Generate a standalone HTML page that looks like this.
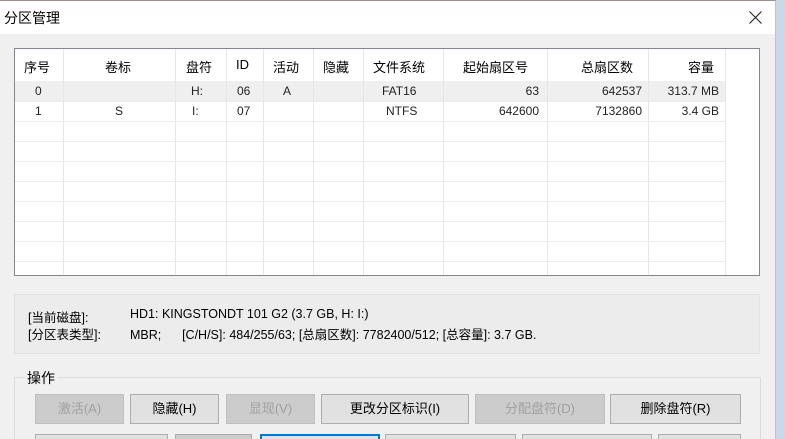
<!DOCTYPE html>
<html style="height:439px;overflow:hidden"><head><meta charset="utf-8"><style>
body{margin:0;width:785px;height:439px;overflow:hidden;background:#c9d9e8;font-family:"Liberation Sans","Noto Sans CJK SC",sans-serif;font-size:13px;color:#000;position:relative}
.win{position:absolute;left:0;top:0;width:775px;height:438px;background:#f0f0f0;border-top:1px solid #9a8f8a;border-right:1px solid #b8c4d0;overflow:hidden}
.title{position:absolute;left:0;top:0;width:775px;height:33px;background:#fff}
.title span{position:absolute;left:4px;top:7px;font-size:14px}
.x{position:absolute;left:749px;top:10px}
.tbl{position:absolute;left:14px;top:47px;width:744px;height:226px;background:#fff;border:1px solid #828790;overflow:hidden}
.c{position:absolute;top:0;height:226px;border-right:1px solid #e6e6e6}
.hd{position:absolute;top:8px;font-size:13px}
.r{position:absolute;left:0;width:711px;height:20px;border-bottom:1px solid #ececec}
.t{position:absolute;font-size:12px;top:3px;color:#222}
.info{position:absolute;left:14px;top:293px;width:744px;height:58px;background:#ececec;border:1px solid #e2e2e2;font-size:12.5px}
.grp{position:absolute;left:14px;top:376px;width:745px;height:70px;border:1px solid #dcdcdc}
.lbl{position:absolute;left:25px;top:367px;background:#f0f0f0;padding:0 2px;font-size:14px}
.b{position:absolute;height:28px;border:1px solid #adadad;background:#e1e1e1;text-align:center;line-height:28px;font-size:13px}
.b2{height:6px;border-bottom:none}
.d{color:#a0a0a0;background:#cccccc;border-color:#bfbfbf}
</style></head><body>
<div class="win">
<div class="title"><span>分区管理</span><svg class="x" width="13" height="13" viewBox="0 0 13 13"><path d="M0.5 0.5L12.5 12.5M12.5 0.5L0.5 12.5" stroke="#222" stroke-width="1.1"/></svg></div>
<div class="tbl">
<div class="r" style="top:32px;background:#efefef"></div>
<div class="r" style="top:52px"></div>
<div class="r" style="top:72px"></div><div class="r" style="top:92px"></div><div class="r" style="top:112px"></div><div class="r" style="top:132px"></div><div class="r" style="top:152px"></div><div class="r" style="top:172px"></div><div class="r" style="top:192px"></div><div class="r" style="top:212px"></div>
<div class="c" style="left:0;width:48px"></div>
<div class="c" style="left:49px;width:111px"></div>
<div class="c" style="left:161px;width:50px"></div>
<div class="c" style="left:212px;width:36px"></div>
<div class="c" style="left:249px;width:49px"></div>
<div class="c" style="left:299px;width:49px"></div>
<div class="c" style="left:349px;width:79px"></div>
<div class="c" style="left:429px;width:103px"></div>
<div class="c" style="left:533px;width:100px"></div>
<div class="c" style="left:634px;width:76px"></div>
<div class="hd" style="left:9px">序号</div>
<div class="hd" style="left:90px">卷标</div>
<div class="hd" style="left:171px">盘符</div>
<div class="hd" style="left:221px">ID</div>
<div class="hd" style="left:258px">活动</div>
<div class="hd" style="left:308px">隐藏</div>
<div class="hd" style="left:358px">文件系统</div>
<div class="hd" style="left:448px">起始扇区号</div>
<div class="hd" style="left:566px">总扇区数</div>
<div class="hd" style="left:673px">容量</div>
<div style="position:absolute;top:32px;left:0;width:711px;height:20px">
<div class="t" style="left:20px">0</div><div class="t" style="left:176px">H:</div><div class="t" style="left:222px">06</div><div class="t" style="left:268px">A</div><div class="t" style="left:367px">FAT16</div><div class="t" style="right:187px">63</div><div class="t" style="right:84px">642537</div><div class="t" style="right:7px">313.7 MB</div></div>
<div style="position:absolute;top:52px;left:0;width:711px;height:20px">
<div class="t" style="left:20px">1</div><div class="t" style="left:100px">S</div><div class="t" style="left:177px">I:</div><div class="t" style="left:222px">07</div><div class="t" style="left:371px">NTFS</div><div class="t" style="right:187px">642600</div><div class="t" style="right:84px">7132860</div><div class="t" style="right:7px">3.4 GB</div></div>
</div>
<div class="info">
<div style="position:absolute;left:13px;top:12px">[当前磁盘]:</div><div style="position:absolute;left:115px;top:12px">HD1: KINGSTONDT 101 G2 (3.7 GB, H: I:)</div>
<div style="position:absolute;left:13px;top:29px">[分区表类型]:</div><div style="position:absolute;left:115px;top:29px;white-space:pre">MBR;      [C/H/S]: 484/255/63; [总扇区数]: 7782400/512; [总容量]: 3.7 GB.</div>
</div>
<div class="grp"></div><div class="lbl">操作</div>
<div class="b d" style="left:35px;top:393px;width:87px">激活(A)</div>
<div class="b" style="left:130px;top:393px;width:87px">隐藏(H)</div>
<div class="b d" style="left:226px;top:393px;width:87px">显现(V)</div>
<div class="b" style="left:321px;top:393px;width:146px">更改分区标识(I)</div>
<div class="b d" style="left:475px;top:393px;width:128px">分配盘符(D)</div>
<div class="b" style="left:610px;top:393px;width:129px">删除盘符(R)</div>
<div class="b b2" style="left:35px;top:433px;width:131px"></div>
<div class="b b2" style="left:175px;top:433px;width:75px;background:#ccc"></div>
<div class="b b2" style="left:260px;top:433px;width:116px;border:2px solid #0078d7;border-bottom:none"></div>
<div class="b b2" style="left:385px;top:433px;width:129px"></div>
<div class="b b2" style="left:522px;top:433px;width:128px"></div>
<div class="b b2" style="left:658px;top:433px;width:81px"></div>
</div>
</body></html>
